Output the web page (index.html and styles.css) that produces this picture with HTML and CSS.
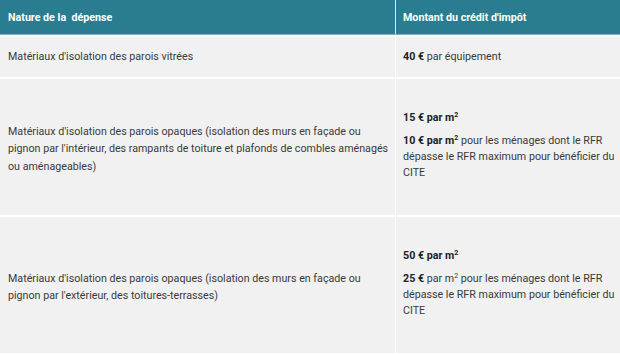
FILE: index.html
```html
<!DOCTYPE html>
<html lang="fr">
<head>
<meta charset="utf-8">
<title>Crédit d'impôt</title>
<link rel="stylesheet" href="styles.css">
</head>
<body>
<table class="credit">
  <colgroup>
    <col class="col-nature">
    <col class="col-montant">
  </colgroup>
  <thead>
    <tr>
      <th>Nature de la&nbsp; dépense</th>
      <th>Montant du crédit d'impôt</th>
    </tr>
  </thead>
  <tbody>
    <tr class="row-short">
      <td>Matériaux d'isolation des parois vitrées</td>
      <td><b>40 €</b> par équipement</td>
    </tr>
    <tr class="row-tall">
      <td class="nature">Matériaux d'isolation des parois opaques (isolation des murs en façade ou pignon par l'intérieur, des rampants de toiture et plafonds de combles aménagés ou aménageables)</td>
      <td class="amount">
        <p class="first"><b>15 € par m<sup>2</sup></b></p>
        <p><b>10 € par m<sup>2</sup></b> pour les ménages dont le RFR dépasse le RFR maximum pour bénéficier du CITE</p>
      </td>
    </tr>
    <tr class="row-tall">
      <td class="nature">Matériaux d'isolation des parois opaques (isolation des murs en façade ou pignon par l'extérieur, des toitures-terrasses)</td>
      <td class="amount">
        <p class="first"><b>50 € par m<sup>2</sup></b></p>
        <p><b>25 €</b> par m<sup>2</sup> pour les ménages dont le RFR dépasse le RFR maximum pour bénéficier du CITE</p>
      </td>
    </tr>
  </tbody>
</table>
</body>
</html>
```

FILE: styles.css
```css
html, body {
  margin: 0;
  padding: 0;
  background: #ffffff;
  overflow: hidden;
}

.credit {
  width: 620px;
  border-collapse: separate;
  border-spacing: 0;
  table-layout: fixed;
  font-family: Roboto, "Liberation Sans", Arial, sans-serif;
  font-size: 10.7px;
  color: #3a3a3a;
}

.col-nature {
  width: 396px;
}

.credit th,
.credit td {
  box-sizing: border-box;
}

.credit th {
  background: #2a7d90;
  color: #ffffff;
  font-weight: bold;
  text-align: left;
  height: 35px;
  padding: 1px 4px 0 8px;
  line-height: 16px;
  border-bottom: 1px solid #86b4be;
  border-right: 1px solid #d9e8ec;
}

.credit th:last-child {
  border-right: none;
  padding-left: 7px;
}

.credit td {
  background: #f1f1f1;
  padding: 0 3px 0 8px;
  line-height: 17.5px;
  vertical-align: middle;
  border-top: 2px solid #ffffff;
  border-right: 1px solid #ffffff;
}

.credit td:last-child {
  border-right: none;
  padding-left: 7px;
  padding-right: 0;
}

.credit b {
  font-weight: bold;
  color: #222222;
}

.row-short td {
  height: 42px;
}

.row-tall td {
  height: 138px;
}

.credit td.nature {
  padding-top: 4px;
}

.amount p {
  margin: 7px 0 0;
  line-height: 16px;
}

.amount p.first {
  margin-top: 0;
}

.credit td.amount {
  padding-bottom: 4px;
}

sup {
  font-size: 7px;
  line-height: 0;
  vertical-align: 4px;
}
```
